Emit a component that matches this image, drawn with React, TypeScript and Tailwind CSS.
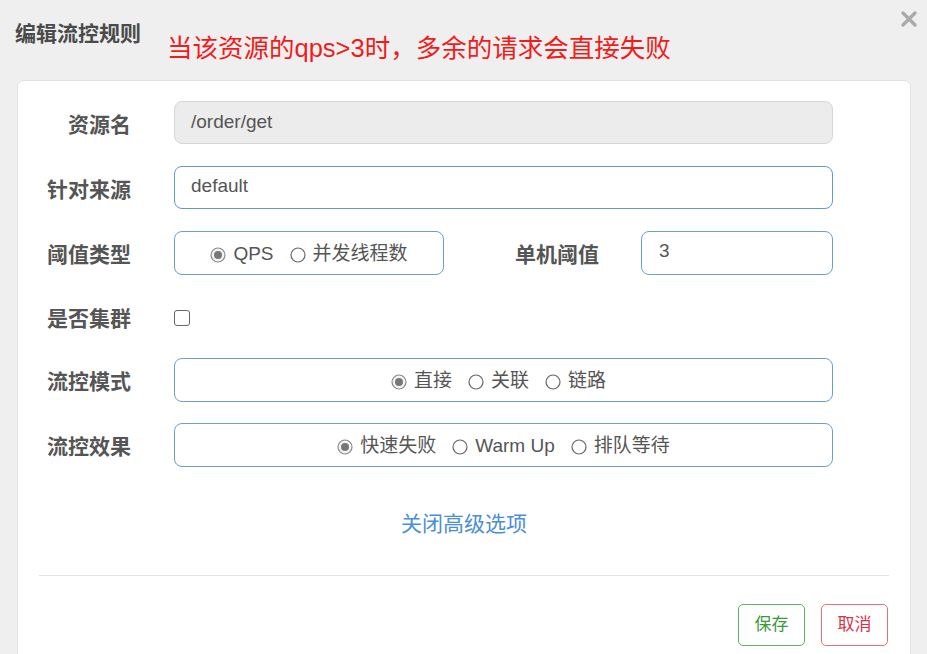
import { useState } from "react"

type Opt = { label: string; checked?: boolean }

function Radio({ checked }: { checked?: boolean }) {
    return (
        <svg width="16" height="16" viewBox="0 0 16 16" className="shrink-0">
            <circle cx="8" cy="8" r="7" fill={checked ? "#f4f4f4" : "#fff"} stroke={checked ? "#8a8a8a" : "#666"} strokeWidth="1.2" />
            {checked && <circle cx="8" cy="8" r="4" fill="#777" />}
        </svg>
    )
}

function RadioGroup({ opts }: { opts: Opt[] }) {
    return (
        <div className="flex items-center justify-center gap-[16px] pt-[3px] text-[19px] text-[#555]">
            {opts.map((o) => (
                <label key={o.label} className="flex items-center gap-[7px]">
                    <Radio checked={o.checked} />
                    <span>{o.label}</span>
                </label>
            ))}
        </div>
    )
}

function Label({ text }: { text: string }) {
    return <div className="w-[113px] shrink-0 pt-[4px] text-right text-[21px] font-bold text-[#555]">{text}</div>
}

export default function App() {
    const [cluster, setCluster] = useState(false)

    return (
        <div
            className="min-h-[654px] bg-[#efefef] overflow-hidden"
            style={{ fontFamily: '"Liberation Sans", "Noto Sans CJK SC", sans-serif' }}
        >
            {/* header */}
            <div className="relative flex h-[80px] items-start pl-[15px]">
                <div className="mt-[18px] text-[21px] font-bold text-[#4a4a4a]">编辑流控规则</div>
                <div className="ml-[26px] mt-[31px] text-[25.5px] leading-[34px] text-[#f01c1c]">当该资源的qps&gt;3时，多余的请求会直接失败</div>
                <svg width="16" height="16" viewBox="0 0 16 16" className="absolute right-[10px] top-[11px]">
                    <path d="M2 2 L14 14 M14 2 L2 14" stroke="#aaa" strokeWidth="3.2" strokeLinecap="round" />
                </svg>
            </div>

            {/* card */}
            <div className="ml-[17px] mr-[16px] h-[600px] rounded-md border border-[#e2e2e2] bg-white px-[21px] pt-[20px]">
                <div className="-ml-[21px]">
                    <div className="mb-[22px] flex h-[43px] items-center">
                        <Label text="资源名" />
                        <div className="ml-[43px] flex h-full w-[659px] items-center rounded-[8px] border border-[#d6d6d6] bg-[#ececec] px-[16px] text-[19px] text-[#555]">
                            /order/get
                        </div>
                    </div>

                    <div className="mb-[22px] flex h-[43px] items-center">
                        <Label text="针对来源" />
                        <div className="ml-[43px] flex h-full w-[659px] items-center rounded-[8px] border border-[#5f98d3] bg-white px-[16px] pb-[3px] text-[19px] text-[#555]">
                            default
                        </div>
                    </div>

                    <div className="mb-[22px] flex h-[44px] items-center">
                        <Label text="阈值类型" />
                        <div className="ml-[43px] flex h-full w-[270px] items-center justify-center rounded-[8px] border border-[#6a9fd6]">
                            <RadioGroup opts={[{ label: "QPS", checked: true }, { label: "并发线程数" }]} />
                        </div>
                        <div className="w-[155px] pt-[4px] text-right text-[21px] font-bold text-[#555]">单机阈值</div>
                        <div className="ml-[42px] flex h-full w-[192px] items-center rounded-[8px] border border-[#6a9fd6] px-[17px] pb-[4px] text-[19px] text-[#555]">
                            3
                        </div>
                    </div>

                    <div className="mb-[22px] flex h-[39px] items-center">
                        <Label text="是否集群" />
                        <button
                            onClick={() => setCluster(!cluster)}
                            className="ml-[43px] mt-[2px] h-[16px] w-[16px] rounded-[3px] border-[1.5px] border-[#666] bg-white"
                        />
                    </div>

                    <div className="mb-[21px] flex h-[44px] items-center">
                        <Label text="流控模式" />
                        <div className="ml-[43px] flex h-full w-[659px] items-center justify-center rounded-[8px] border border-[#6a9fd6] pr-[10px]">
                            <RadioGroup opts={[{ label: "直接", checked: true }, { label: "关联" }, { label: "链路" }]} />
                        </div>
                    </div>

                    <div className="flex h-[44px] items-center">
                        <Label text="流控效果" />
                        <div className="ml-[43px] flex h-full w-[659px] items-center justify-center rounded-[8px] border border-[#6a9fd6]">
                            <RadioGroup opts={[{ label: "快速失败", checked: true }, { label: "Warm Up" }, { label: "排队等待" }]} />
                        </div>
                    </div>
                </div>

                <div className="mt-[44px] text-center text-[21px] leading-[26px] text-[#4a8ed6]">关闭高级选项</div>

                <div className="mt-[38px] border-t border-[#e3e3e3]" />

                <div className="mt-[28px] flex justify-end gap-[16px] pr-[1px]">
                    <button className="h-[42px] w-[67px] rounded-[5px] border border-[#5cb85c] text-[17px] text-[#3a9a3a]">保存</button>
                    <button className="h-[42px] w-[67px] rounded-[5px] border border-[#e8707d] text-[17px] text-[#d93048]">取消</button>
                </div>
            </div>
        </div>
    )
}
